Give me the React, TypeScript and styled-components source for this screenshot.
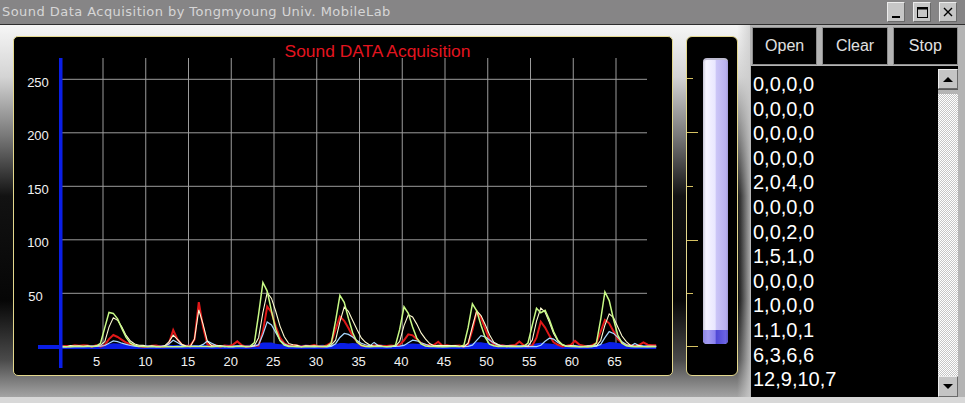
import { createGlobalStyle, styled } from "styled-components";

const GlobalStyle = createGlobalStyle`
  html, body { margin: 0; padding: 0; background: #d8d8d8; }
  body { font-family: "Liberation Sans", Arial, sans-serif; }
`;

// ---- chart data (page coordinates, sample every half unit) ----
const X0 = 62;
const STEP = 4.275;
const SAMPLES = 140;
const yOf = (v: number) => 346.8 - v * 1.07;

type Peak = [number, number, number, number]; // index, height, left width, right width

const sx = (n: number) => X0 + STEP * n;

function noise(seed: number, n: number, amp: number) {
  const r = Math.sin(n * 12.9898 + seed * 78.233) * 43758.5453;
  return (r - Math.floor(r)) * amp;
}

function valueAt(peaks: Peak[], n: number) {
  let v = 0;
  for (const [c, h, wl, wr] of peaks) {
    const d = n - c;
    const w = d < 0 ? wl : wr;
    v = Math.max(v, h * Math.exp(-(d * d) / (w * w)));
  }
  return v;
}

function curve(peaks: Peak[], seed: number, amp: number) {
  const pts: string[] = [];
  for (let n = 0; n < SAMPLES; n++) {
    const v = valueAt(peaks, n) + noise(seed, n, amp);
    pts.push(`${sx(n).toFixed(1)},${yOf(v).toFixed(1)}`);
  }
  return pts.join(" ");
}

const green: Peak[] = [
  [11, 32, 1.3, 2.8], [11.8, 31, 1.3, 2.8], [47, 60, 1.2, 2.6], [65, 48, 1.2, 2.6],
  [80, 37, 1.1, 2.4], [96, 40, 1.1, 2.4], [111, 36, 1.3, 2.8], [112.5, 35, 1.3, 2.6],
  [127, 51, 1.2, 2.4],
];
const pale: Peak[] = [
  [12, 27, 1.5, 3], [26, 10, 1, 1.6], [32, 34, 0.8, 1.4], [48, 50, 1.5, 3],
  [66, 36, 1.5, 3.2], [81, 30, 1.5, 3.2], [97, 33, 1.3, 2.8], [112, 36, 1.5, 2.8],
  [128, 30, 1.5, 2.8],
];
const red: Peak[] = [
  [12, 10, 1.4, 3], [26, 14, 0.8, 1.2], [32, 41, 0.7, 1.1], [48, 37, 1, 2.4],
  [65, 27, 1.3, 2.8], [81, 11, 1.3, 2.6], [97, 32, 1.1, 2.4], [112, 22, 1, 2.2],
  [127, 24, 1.3, 2.6], [41, 4, 1, 1], [88, 4, 0.8, 0.8], [107, 4, 0.8, 0.8],
  [120, 5, 0.8, 0.8], [136, 3, 1, 1],
];
const sky: Peak[] = [
  [12, 5, 1.4, 3], [26, 6, 1, 1.5], [34, 5, 1, 1.5], [48, 23, 1.2, 2.6],
  [66, 12, 1.6, 3.4], [82, 6, 1.4, 2.8], [98, 10, 1.4, 2.8], [114, 8, 1.4, 2.4],
  [128, 14, 1.4, 2.8], [73, 4, 0.8, 0.8], [134, 3, 0.8, 0.8],
];
const fillPeaks: Peak[] = [
  [12, 1.5, 2, 3], [48, 2.5, 2, 3], [66, 2, 2, 4], [82, 1.5, 2, 3],
  [97, 2.5, 2, 4], [112, 2, 2, 3], [128, 2.5, 2, 4],
];

function fillArea() {
  const pts: string[] = [`${sx(0)},349`];
  for (let n = 0; n < SAMPLES; n++) {
    const v = 1.2 + valueAt(fillPeaks, n) + noise(9, n, 0.8);
    pts.push(`${sx(n).toFixed(1)},${yOf(v).toFixed(1)}`);
  }
  pts.push(`${sx(SAMPLES - 1).toFixed(1)},349`);
  return pts.join(" ");
}

const gridY = [79.3, 132.8, 186.3, 239.8, 293.3];
const yLabels = ["250", "200", "150", "100", "50"];
const gridX = Array.from({ length: 13 }, (_, i) => 103 + 42.75 * i);
const xLabels = Array.from({ length: 13 }, (_, i) => (i + 1) * 5);

const logLines = [
  "0,0,0,0", "0,0,0,0", "0,0,0,0", "0,0,0,0", "2,0,4,0", "0,0,0,0", "0,0,2,0",
  "1,5,1,0", "0,0,0,0", "1,0,0,0", "1,1,0,1", "6,3,6,6", "12,9,10,7",
];

const meterTicks = [
  { y: 41, long: false }, { y: 95, long: true }, { y: 149, long: false },
  { y: 203, long: true }, { y: 256, long: false }, { y: 309, long: true },
];

// ---- layout ----
const Window = styled.div`
  width: 965px;
  height: 403px;
  display: flex;
  flex-direction: column;
  overflow: hidden;
`;

const TitleBar = styled.div`
  height: 25px;
  box-sizing: border-box;
  background: #868586;
  border-bottom: 1px solid #2e2e2e;
  display: flex;
  align-items: flex-start;
  padding-left: 2px;
`;

const TitleText = styled.div`
  font-family: "DejaVu Sans", Verdana, sans-serif;
  font-size: 13px;
  letter-spacing: 0.45px;
  line-height: 24px;
  color: #d6d6d6;
  white-space: nowrap;
`;

const CaptionButtons = styled.div`
  margin-left: auto;
  display: flex;
  gap: 8px;
  padding: 2px 8px 0 0;
`;

const CaptionButton = styled.div`
  width: 18px;
  height: 20px;
  box-sizing: border-box;
  background: #c6c6c6;
  border: 1px solid;
  border-color: #ececec #6a6a6a #6a6a6a #ececec;
  display: flex;
  align-items: center;
  justify-content: center;

  svg {
    display: block;
  }
`;

const Body = styled.div`
  flex: 1;
  display: flex;
`;

const PlotArea = styled.div`
  width: 750px;
  box-sizing: border-box;
  padding: 11px 0 0 13px;
  display: flex;
  align-items: flex-start;
  gap: 13px;
  background:
    linear-gradient(90deg, rgba(200, 200, 200, 0) 98.3%, rgba(205, 205, 205, 0.8) 100%),
    linear-gradient(
      180deg,
      #f6f6f6 0%,
      #d4d4d4 14%,
      #777 30%,
      #121212 46%,
      #060606 74%,
      #4a4a4a 90%,
      #a4a4a4 100%
    );
`;

const ChartPanel = styled.div`
  width: 660px;
  height: 340px;
  box-sizing: border-box;
  border: 1px solid #e4d88e;
  border-radius: 5px;
  background: #000;
  overflow: hidden;

  svg {
    display: block;
  }
`;

const MeterPanel = styled.div`
  width: 52px;
  height: 340px;
  box-sizing: border-box;
  border: 1px solid #e4d88e;
  border-radius: 6px;
  background: #000;
  display: flex;
  align-items: flex-start;

  svg {
    display: block;
    flex: none;
  }
`;

const Tube = styled.div`
  margin-top: 21px;
  width: 25px;
  height: 284px;
  border-radius: 4px;
  overflow: hidden;
  display: flex;
  flex-direction: column;
  justify-content: flex-end;
  background: linear-gradient(
    90deg,
    #c8c6d8 0%,
    #f6f5ff 12%,
    #e9e7ff 48%,
    #cbc5f7 54%,
    #b9b1ef 92%,
    #a39bd8 100%
  );
  border-top: 2px solid #bdbbd0;
`;

const Level = styled.div`
  height: 14px;
  background: linear-gradient(
    90deg,
    #8d86e4 0%,
    #a39cf2 20%,
    #8a82ee 48%,
    #5049d6 54%,
    #6b63e2 90%,
    #5a54c8 100%
  );
`;

const Side = styled.div`
  width: 215px;
  box-sizing: border-box;
  padding: 2px 7px 0 1px;
  background: #b4b4b4;
  display: flex;
  flex-direction: column;
`;

const ButtonRow = styled.div`
  display: flex;
  gap: 5px;
  height: 38px;
  margin: 0 0 1px 1px;
`;

const ActionButton = styled.div`
  flex: 1;
  box-sizing: border-box;
  background: #000;
  border: 1px solid #8e8e8e;
  color: #e0e0e0;
  font-size: 16px;
  display: flex;
  align-items: center;
  justify-content: center;
`;

const ListBox = styled.div`
  flex: 1;
  display: flex;
  background: #000;
  overflow: hidden;
`;

const Lines = styled.div`
  flex: 1;
  padding: 6px 0 0 2px;
  color: #fff;
  font-size: 20px;
  line-height: 24.6px;
  white-space: nowrap;
  overflow: hidden;
`;

const ScrollBar = styled.div`
  width: 20px;
  padding-top: 3px;
  display: flex;
  flex-direction: column;
`;

const ScrollButton = styled.div<{ $down?: boolean }>`
  height: ${({ $down }) => ($down ? 21 : 20)}px;
  box-sizing: border-box;
  background: #c4c4c4;
  border: 1px solid;
  border-color: #ececec #6a6a6a #6a6a6a #ececec;
  display: flex;
  align-items: center;
  justify-content: center;

  &::after {
    content: "";
    width: 0;
    height: 0;
    border-left: 5px solid transparent;
    border-right: 5px solid transparent;
    ${({ $down }) =>
      $down ? "border-top: 5px solid #000;" : "border-bottom: 5px solid #000;"}
  }
`;

const Thumb = styled.div`
  height: 4px;
  background: #b4b4b4;
  border-top: 1px solid #5a5a5a;
`;

const Track = styled.div`
  flex: 1;
  background: repeating-conic-gradient(#c6c6c6 0 25%, #ffffff 0 50%) 0 0 / 2px 2px;
`;

const BottomStrip = styled.div`
  height: 6px;
  background: #d8d8d8;
`;

function Chart() {
  return (
    <svg width={658} height={338} viewBox="14 37 658 338">
      <text
        x={377.5}
        y={57}
        textAnchor="middle"
        fill="#e3141f"
        fontSize={17.4}
        fontFamily="Liberation Sans, Arial, sans-serif"
      >
        Sound DATA Acquisition
      </text>
      {gridY.map((y) => (
        <line key={y} x1={60} x2={647} y1={y} y2={y} stroke="#9c9c9c" strokeWidth={1} />
      ))}
      {gridX.map((x) => (
        <line key={x} x1={x} x2={x} y1={58} y2={347} stroke="#9c9c9c" strokeWidth={1} />
      ))}
      {gridY.map((y, i) => (
        <text
          key={yLabels[i]}
          x={yLabels[i].length === 3 ? 38 : 35.5}
          y={y + 7.3}
          textAnchor="middle"
          fill="#f2f2f2"
          fontSize={13}
          fontFamily="Liberation Sans, Arial, sans-serif"
        >
          {yLabels[i]}
        </text>
      ))}
      {xLabels.map((v, i) => (
        <text
          key={v}
          x={95.5 + 42.65 * i - (v < 10 ? 2.5 : 0)}
          y={366}
          fill="#f2f2f2"
          fontSize={13}
          fontFamily="Liberation Sans, Arial, sans-serif"
        >
          {v}
        </text>
      ))}
      <polygon points={fillArea()} fill="#0a1ee6" />
      <rect x={38} y={345} width={617} height={4} fill="#0a1ee6" />
      <polyline points={curve(red, 3, 1.6)} fill="none" stroke="#e01818" strokeWidth={2} />
      <polyline points={curve(sky, 5, 0.6)} fill="none" stroke="#a8d8ff" strokeWidth={1.2} />
      <polyline points={curve(pale, 7, 1.2)} fill="none" stroke="#fffbd2" strokeWidth={1.1} />
      <polyline points={curve(green, 11, 0.4)} fill="none" stroke="#c8fa86" strokeWidth={1.5} />
      <rect x={59} y={58} width={3.5} height={310} fill="#0a1ee6" />
    </svg>
  );
}

function MeterScale() {
  return (
    <svg width={16} height={338}>
      {meterTicks.map((t) => (
        <line
          key={t.y}
          x1={0}
          x2={t.long ? 11 : 6}
          y1={t.y + 0.5}
          y2={t.y + 0.5}
          stroke="#d6c262"
          strokeWidth={1}
        />
      ))}
    </svg>
  );
}

export default function App() {
  return (
    <>
      <GlobalStyle />
      <Window>
        <TitleBar>
          <TitleText>Sound Data Acquisition by Tongmyoung Univ. MobileLab</TitleText>
          <CaptionButtons>
            <CaptionButton>
              <svg width={12} height={14} viewBox="0 0 12 14">
                <rect x={2} y={11} width={8} height={2} fill="#000" />
              </svg>
            </CaptionButton>
            <CaptionButton>
              <svg width={13} height={13} viewBox="0 0 13 13">
                <rect x={1.5} y={1.5} width={10} height={10} fill="none" stroke="#000" strokeWidth={1} />
                <rect x={1} y={1} width={11} height={2.5} fill="#000" />
              </svg>
            </CaptionButton>
            <CaptionButton>
              <svg width={12} height={12} viewBox="0 0 12 12">
                <path d="M2 2 L10 10 M10 2 L2 10" stroke="#000" strokeWidth={1.4} />
              </svg>
            </CaptionButton>
          </CaptionButtons>
        </TitleBar>
        <Body>
          <PlotArea>
            <ChartPanel>
              <Chart />
            </ChartPanel>
            <MeterPanel>
              <MeterScale />
              <Tube>
                <Level />
              </Tube>
            </MeterPanel>
          </PlotArea>
          <Side>
            <ButtonRow>
              <ActionButton>Open</ActionButton>
              <ActionButton>Clear</ActionButton>
              <ActionButton>Stop</ActionButton>
            </ButtonRow>
            <ListBox>
              <Lines>
                {logLines.map((line, i) => (
                  <div key={i}>{line}</div>
                ))}
              </Lines>
              <ScrollBar>
                <ScrollButton />
                <Thumb />
                <Track />
                <ScrollButton $down />
              </ScrollBar>
            </ListBox>
          </Side>
        </Body>
        <BottomStrip />
      </Window>
    </>
  );
}
